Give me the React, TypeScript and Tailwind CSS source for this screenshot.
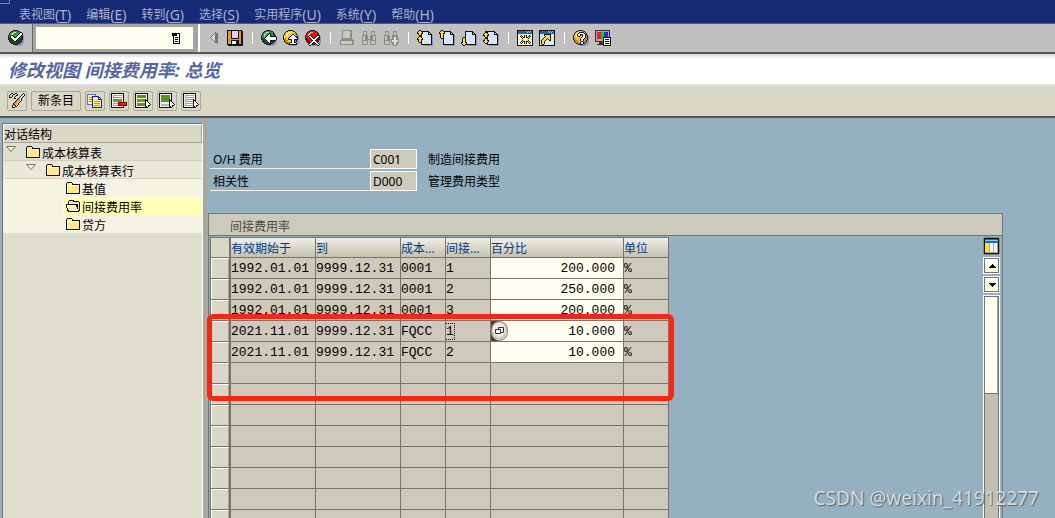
import type { ReactNode } from "react"
import clsx from "clsx"

const menus = [
  { label: "表视图", key: "T" },
  { label: "编辑", key: "E" },
  { label: "转到", key: "G" },
  { label: "选择", key: "S" },
  { label: "实用程序", key: "U" },
  { label: "系统", key: "Y" },
  { label: "帮助", key: "H" },
]

const rows = [
  { from: "1992.01.01", to: "9999.12.31", cost: "0001", type: "1", percent: "200.000" },
  { from: "1992.01.01", to: "9999.12.31", cost: "0001", type: "2", percent: "250.000" },
  { from: "1992.01.01", to: "9999.12.31", cost: "0001", type: "3", percent: "200.000" },
  { from: "2021.11.01", to: "9999.12.31", cost: "FQCC", type: "1", percent: "10.000", active: true },
  { from: "2021.11.01", to: "9999.12.31", cost: "FQCC", type: "2", percent: "10.000" },
]

const emptyRows = Array.from({ length: 10 }, (_, i) => i)

// one letter per pixel colour, anything else is transparent
const palette: Record<string, string> = {
  k: "#111111",
  w: "#ffffff",
  y: "#ffe51a",
  p: "#d6e6f8",
  s: "#8f8fb8",
  o: "#f29422",
  r: "#e01414",
  g: "#8d8d85",
  l: "#c9c9bd",
}

function Icon({ children }: { children: ReactNode }) {
  return (
    <svg viewBox="0 0 16 16" className="h-4 w-4 shrink-0" aria-hidden="true" shapeRendering="crispEdges">
      {children}
    </svg>
  )
}

function Pixels({ map, x = 0, y = 0 }: { map: string[]; x?: number; y?: number }) {
  return (
    <>
      {map.flatMap((line, dy) =>
        [...line].map((c, dx) =>
          palette[c] ? <rect key={dy * 16 + dx} x={x + dx} y={y + dy} width="1" height="1" fill={palette[c]} /> : null,
        ),
      )}
    </>
  )
}

function Ball({ dark, color, light, map }: { dark: string; color: string; light: string; map: string[] }) {
  return (
    <Icon>
      <path d="M14 5h1v1h1v7h-1v2h-2v1H7v-1H5z" fill="#8f8fc0" />
      <path d="M5 0h5v1h2v1h1v1h1v2h1v5h-1v2h-1v1h-1v1h-2v1H5v-1H3v-1H2v-1H1v-2H0V5h1V3h1V2h1V1h2z" fill="#222" />
      <path d="M5 1h5v1h2v1h1v2h1v5h-1v2h-1v1h-2v1H5v-1H3v-1H2v-2H1V5h1V3h1V2h2z" fill={dark} />
      <path d="M5 1h5v1h2v3h1v3h-2v2H8v2H5v-2H3V8H1V5h1V3h1V2h2z" fill={color} />
      <path d="M5 2h3v1H6v1H5v1H4v2H3V4h1V3h1z" fill={light} />
      <Pixels map={map} />
    </Icon>
  )
}

const checkMap = [
  "",
  "",
  "............kk",
  "...........kwwk",
  "..........kwwwk",
  "...kk....kwwwk",
  "..kwwk..kwwwk",
  "..kwwwkkwwwk",
  "...kwwwwwwk",
  "....kwwwwk",
  ".....kwwk",
  "......kk",
]

const backMap = [
  "",
  "",
  "",
  "........kk",
  ".......kwk",
  "......kwwk",
  ".....kwwwkkkkkk",
  "....kwwwwwwwwwwk",
  "...kwwwwwwwwwwwk",
  "....kwwwwwwwwwwk",
  ".....kwwwkkkkkk",
  "......kwwk",
  ".......kwk",
  "........kk",
]

const upMap = [
  "",
  "",
  "",
  "",
  ".........kk",
  "........kwwk",
  ".......kwwwwk",
  "......kwwwwwwk",
  ".....kwwwwwwwwk",
  ".....kkkkwwkkkk",
  "........kwwk",
  "........kwwk",
  ".......kkwwkk",
  "......kwwwwwwk",
  "......kkkkkkkk",
]

const cancelMap = [
  "",
  "",
  "",
  "",
  "",
  "....kk......kk",
  "...kwwk....kwwk",
  "....kwwk..kwwk",
  ".....kwwkkwwk",
  "......kwwwwk",
  ".......kwwk",
  "......kwwwwk",
  ".....kwwkkwwk",
  "....kwwk..kwwk",
  "...kwwk....kwwk",
  "....kk......kk",
]

const helpMap = [
  "",
  "",
  "......kkkkk",
  ".....kwwwwwk",
  "....kwwkkkwwk",
  "....kwwk.kwwk",
  ".....kk..kwwk",
  "........kwwwk",
  ".......kwwwk",
  ".......kwwk",
  ".......kwwk",
  "........kk",
  ".......kwwk",
  ".......kwwk",
  "........kk",
]

function TriangleLeftIcon() {
  return (
    <Icon>
      <path d="M11 3h2v11h-1v-1h-1v-1h-1v-1H9v-1H8z" fill="#777" />
      <path d="M10 2h1v11h-1v-1H9v-1H8v-1H7V9H6V8H5V7h1V6h1V5h1V4h1V3h1z" fill="#777" />
      <path d="M10 4v7H9v-1H8V9H7V8H6V7h1V6h1V5h1V4z" fill="#dcdcdc" />
    </Icon>
  )
}

function SaveIcon() {
  return (
    <Icon>
      <path d="M0 0h15v1h1v15H1v-1H0z" fill="#111" />
      <path d="M1 1h3v8h8V1h2v13h-2v-4H4v4H1z" fill="#f29422" />
      <path d="M5 1h6v7H5z" fill="#ddd0ec" />
      <path d="M5 11h6v3H5z" fill="#fff" />
      <path d="M9 11h2v3H9z" fill="#111" />
    </Icon>
  )
}

function PrintIcon() {
  return (
    <Icon>
      <path d="M3 0h10v9h1v1h1v5H1v-5h1V9h1z" fill="#8d8d85" />
      <path d="M4 1h7v7H4zM2 11h11v3H2z" fill="#c9c9bd" />
      <path d="M11 2h1v1h-1z" fill="#c9c9bd" />
    </Icon>
  )
}

function FindIcon({ more }: { more?: boolean }) {
  return (
    <Icon>
      <path d="M2 1h4v4h1v2h2V5h1V1h4v4h1v10H9v-5H7v5H1V5h1z" fill="#8d8d85" />
      <path d="M3 2h2v3H3zM11 2h2v3h-2zM2 6h2v4H2zM12 6h2v4h-2zM2 11h4v3H2zM10 11h4v3h-4zM7 7h2v2H7z" fill="#c4c4b8" />
      {more && (
        <>
          <path d="M10 6h4v3h2v4h-2v3h-4v-3H8V9h2z" fill="#8d8d85" />
          <path d="M11 7h2v3h2v2h-2v3h-2v-3H9v-2h2z" fill="#deded4" />
        </>
      )}
    </Icon>
  )
}

const arrowUp = ["..kk", ".kyyk", "kyyyyk", "kkyykk", ".kyyk"]
const arrowDown = [".kyyk", "kkyykk", "kyyyyk", ".kyyk", "..kk"]
const arrowStem = [".kyyk", ".kyyk", ".kyyk"]

function PageArrowIcon({ kind }: { kind: "first" | "prev" | "next" | "last" }) {
  return (
    <Icon>
      <path d="M6 15h9V5h1v11H6z" fill="#8f8fb8" />
      <path d="M4 1h8v1h1v1h1v1h1v11H4z" fill="#111" />
      <path d="M5 2h6v3h3v9H5z" fill="#d6e6f8" />
      <path d="M12 3h1v1h-1z" fill="#fff" />
      {kind === "first" && (
        <>
          <Pixels map={arrowUp} />
          <Pixels map={["..kk"]} y={5} />
          <Pixels map={arrowUp} y={6} />
          <Pixels map={[".kyyk", "..kk"]} y={11} />
        </>
      )}
      {kind === "prev" && (
        <>
          <Pixels map={arrowUp} />
          <Pixels map={arrowStem} y={5} />
          <Pixels map={["..kk"]} y={8} />
        </>
      )}
      {kind === "next" && (
        <>
          <Pixels map={["..kk"]} y={7} />
          <Pixels map={arrowStem} y={8} />
          <Pixels map={arrowDown} y={11} />
        </>
      )}
      {kind === "last" && (
        <>
          <Pixels map={["..kk"]} y={1} />
          <Pixels map={arrowUp} y={2} />
          <Pixels map={["..kk"]} y={7} />
          <Pixels map={["..kk"]} y={8} />
          <Pixels map={arrowDown} y={9} />
        </>
      )}
    </Icon>
  )
}

const starMap = [
  "......y",
  ".yk..kyk..ky",
  ".kyk.kyk.kyk",
  "..kykkykkyk",
  "...kywwwyk",
  "yyyyywwwyyyyy",
  "...kywwwyk",
  "..kykkykkyk",
  ".kyk.kyk.kyk",
  ".yk..kyk..ky",
  "......y",
]

const shortcutMap = [
  "....kkkkkkk",
  "....kyyyyyk",
  ".....kyyyyk",
  "....kyyyyyk",
  "...kyyykyyk",
  "..kyyyk.kyk",
  ".kyyyk...kk",
  ".kyyk",
  ".kyyk",
  ".kyyk",
  "..kk",
]

function WindowIcon({ shortcut }: { shortcut?: boolean }) {
  return (
    <Icon>
      <path d="M0 0h16v16H0z" fill="#111" />
      <path d="M1 1h14v3H1z" fill="#1768b0" />
      <path d="M9 1h1v1H9zM11 1h1v1h-1zM13 1h1v1h-1zM10 2h1v1h-1zM12 2h1v1h-1z" fill="#8fc4ee" />
      <path d="M1 4h14v11H1z" fill={shortcut ? "#dce8f6" : "#fffce0"} />
      {shortcut ? <Pixels map={shortcutMap} x={1} y={4} /> : <Pixels map={starMap} x={2} y={4} />}
    </Icon>
  )
}

function MonitorIcon() {
  return (
    <Icon>
      <path d="M0 0h15v12H9v2h1v1H2v-1h2v-2H0z" fill="#333" />
      <path d="M1 1h13v10H1z" fill="#aaa" />
      <path d="M2 2h4v7H2z" fill="#f01818" />
      <path d="M6 2h3v7H6z" fill="#12c738" />
      <path d="M9 2h4v7H9z" fill="#1528e8" />
      <path d="M8 7h8v9H8z" fill="#111" />
      <path d="M9 8h6v7H9z" fill="#fff" />
      <path d="M10 9h4v1h-4zM10 11h4v1h-4zM10 13h4v1h-4z" fill="#111" />
    </Icon>
  )
}

const pencilMap = [
  "..kk..kk......k",
  ".k..kk..k....kwk",
  "k..k...kk...kpwk",
  "k..k..k....kwpk",
  "kkk..k....kwwk",
  ".....kk..kowk",
  "........koowk",
  ".......kooowk",
  "......kooowk",
  ".....kooowk",
  "....kooowk",
  "....kroowk",
  "...kwrrwk",
  "...kwwkk",
  "...kkk",
]

function PencilIcon() {
  return (
    <Icon>
      <Pixels map={pencilMap} />
    </Icon>
  )
}

function CopyIcon() {
  return (
    <Icon>
      <path d="M0 1h9v11H0z" fill="#5a78b4" />
      <path d="M1 2h7v9H1z" fill="#fff0a0" />
      <path d="M2 4h3v1H2zM2 6h3v1H2zM2 8h3v1H2z" fill="#9a8c50" />
      <path d="M5 3h7v1h1v1h1v1h1v9H5z" fill="#1616e0" />
      <path d="M6 4h5v3h3v7H6z" fill="#fff08c" />
      <path d="M12 5h1v1h-1z" fill="#fff" />
      <path d="M7 8h6v1H7zM7 10h6v1H7zM7 12h6v1H7z" fill="#a89850" />
    </Icon>
  )
}

const cursorMap = ["k", "kk", "kwk", "kwwk", "kwwwk", "kwwwwk", "kwwkk", "kkwk", "..k"]

function ListIcon({ kind }: { kind: "delete" | "all" | "block" | "none" }) {
  return (
    <Icon>
      <path d="M0 0h13v15H0z" fill="#111" />
      <path d="M1 1h11v13H1z" fill="#f4f4ec" />
      {kind === "block" ? (
        <>
          <path d="M2 2h9v7H2z" fill="#5c9410" />
          <path d="M2 11h8v2H2z" fill="#a6b6c8" />
        </>
      ) : (
        <>
          <path d="M2 2h9v3H2z" fill={kind === "all" ? "#5c9410" : "#93a3b8"} />
          <path d="M2 6h9v3H2z" fill={kind === "none" ? "#93a3b8" : "#6ba01c"} />
          <path d="M2 10h8v3H2z" fill={kind === "all" ? "#5c9410" : "#93a3b8"} />
          {kind !== "all" && <path d="M3 3h8v1H3zM3 11h7v1H3z" fill="#fff" />}
          {kind === "none" && <path d="M3 7h8v1H3z" fill="#dbe9f6" />}
        </>
      )}
      {kind === "delete" ? (
        <>
          <path d="M7 9h9v4H7z" fill="#7a0000" />
          <path d="M8 10h7v2H8z" fill="#ff1010" />
        </>
      ) : (
        <Pixels map={cursorMap} x={10} y={6} />
      )}
    </Icon>
  )
}

function FolderIcon({ open }: { open?: boolean }) {
  return (
    <svg viewBox="0 0 15 12" className="h-3 w-[15px] shrink-0" aria-hidden="true" shapeRendering="crispEdges">
      {open ? (
        <>
          <path d="M2 1h1V0h5v1h5v1h1v9h-1v1H2v-1H1V8H0V4h2z" fill="#111" />
          <path d="M3 1h4v1h6v8h-1V4H3z" fill="#ffef9e" />
          <path d="M1 5h9v2h1v2h1v2H3v-1H2V8H1z" fill="#fff6b8" />
        </>
      ) : (
        <>
          <path d="M0 1h1V0h5v1h1v1h7v10H0z" fill="#111" />
          <path d="M1 1h5v2h7v8H1z" fill="#ffe88a" />
          <path d="M1 3h12v1H2v7H1z" fill="#fffbe0" />
        </>
      )}
    </svg>
  )
}

function ExpandIcon() {
  return (
    <svg viewBox="0 0 10 7" className="h-[7px] w-[10px] shrink-0" aria-hidden="true">
      <path d="M.5.5h9L5 5.500z" fill="#f3f1e6" stroke="#77766c" />
    </svg>
  )
}

function ToolButton({ label, children }: { label: string; children: ReactNode }) {
  return (
    <button type="button" aria-label={label} className="flex h-6 w-[22px] items-center justify-center">
      {children}
    </button>
  )
}

function Separator() {
  return (
    <span className="flex w-3 justify-center">
      <span className="h-3 w-px bg-white" />
    </span>
  )
}

function AppButton({ label, children }: { label: string; children: ReactNode }) {
  return (
    <button
      type="button"
      aria-label={label}
      className="flex h-5 w-5 items-center justify-center rounded-xs border border-[#aaa794]"
    >
      {children}
    </button>
  )
}

function TreeRow({ label, level, open, selected }: { label: string; level: number; open?: boolean; selected?: boolean }) {
  return (
    <li
      className={clsx(
        "flex h-[18px] items-center",
        level === 0 && "border-b border-[#cfcdbd] bg-[#e0dfcf] pl-[3px]",
        level === 1 && "border-b border-[#d4d2c2] bg-[#eae8d9] pl-[23px]",
        level === 2 && "bg-[#f4f2e1] pl-[60px]",
      )}
    >
      {level < 2 && (
        <button type="button" aria-label={"折叠 " + label} className="flex w-5 pb-1">
          <ExpandIcon />
        </button>
      )}
      <a
        href="#"
        className={clsx("flex h-full flex-1 items-center gap-px", level === 2 && "pl-[3px]", selected && "bg-[#ffffb5]")}
      >
        <FolderIcon open={open} />
        <span className="pt-1">{label}</span>
      </a>
    </li>
  )
}

function Field({ id, label, value, text }: { id: string; label: string; value: string; text: string }) {
  return (
    <div className="flex h-5 items-stretch">
      <label htmlFor={id} className="flex w-40 items-center border-b border-[#f4f2e6] pt-0.5 pl-[3px]">
        {label}
      </label>
      <input
        id={id}
        readOnly
        defaultValue={value}
        className="w-[47px] border border-white bg-[#cdcabb] px-0.5 pt-0.5 outline-none"
      />
      <span className="flex items-center pt-0.5 pl-[11px]">{text}</span>
    </div>
  )
}

const cell = "h-[21px] overflow-hidden border-r border-b border-[#77756b] p-0 pt-0.5 whitespace-nowrap"
const head =
  "h-[21px] overflow-hidden border-t border-r border-b border-[#77756b] bg-linear-to-b from-[#f1f0e9] to-[#c3c1b0] p-0 pt-0.5 text-left font-normal whitespace-nowrap"

function Selector({ label }: { label: string }) {
  return (
    <td className="h-[21px] border-r-2 border-b border-l border-[#77756b] p-0">
      <button
        type="button"
        aria-label={label}
        className="block h-5 w-[18px] border-t border-r border-l border-t-white border-r-[#a5a395] border-l-white bg-[#d9d8c7]"
      />
    </td>
  )
}

function RateTable() {
  return (
    <table className="w-[459px] table-fixed border-separate border-spacing-0 bg-[#cdcabb]">
      <colgroup>
        <col className="w-[21px]" />
        <col className="w-[85px]" />
        <col className="w-[85px]" />
        <col className="w-[45px]" />
        <col className="w-[45px]" />
        <col className="w-[133px]" />
        <col className="w-[45px]" />
      </colgroup>
      <thead className="text-[#003c87]">
        <tr>
          <th aria-label="选择" className="h-[21px] border-t border-r-2 border-b border-l border-[#77756b] bg-[#d9d8c7] p-0" />
          <th className={head}>有效期始于</th>
          <th className={head}>到</th>
          <th className={head}>成本...</th>
          <th className={head}>间接...</th>
          <th className={head}>百分比</th>
          <th className={head}>单位</th>
        </tr>
      </thead>
      <tbody className="font-['Liberation_Mono',monospace] text-[13px]">
        {rows.map((row, i) => (
          <tr key={i}>
            <Selector label={`第 ${i + 1} 行`} />
            <td className={cell}>{row.from}</td>
            <td className={cell}>{row.to}</td>
            <td className={cell}>{row.cost}</td>
            <td className={cell}>
              <span className={clsx(row.active && "outline-1 outline-[#111] outline-dotted")}>{row.type}</span>
            </td>
            <td className="relative h-[21px] border-r border-b border-[#77756b] bg-[#ffffef] p-0">
              <input
                aria-label={`百分比 ${i + 1}`}
                defaultValue={row.percent}
                className="block h-5 w-full pr-2 text-right outline-none"
              />
              {row.active && (
                <button type="button" aria-label="可能的条目" className="absolute top-0 left-0 h-5 w-[17px]">
                  <svg viewBox="0 0 17 20" className="h-5 w-[17px]" aria-hidden="true">
                    <path d="M0 0h8v20H0z" fill="#46443c" />
                    <rect x=".5" y=".5" width="16" height="19" rx="8" fill="#d0cec0" stroke="#8a887c" />
                    <rect x="2" y="2" width="12" height="14" rx="6" fill="#eeece2" />
                    <path d="M7.500 6.500h5v5h-5z" fill="#fff" stroke="#333" />
                    <path d="M4.500 8.500h5v4h-5z" fill="#fff" stroke="#333" />
                  </svg>
                </button>
              )}
            </td>
            <td className={cell}>%</td>
          </tr>
        ))}
        {emptyRows.map((i) => (
          <tr key={i}>
            <Selector label={`空行 ${i + 1}`} />
            <td className={cell} />
            <td className={cell} />
            <td className={cell} />
            <td className={cell} />
            <td className={cell} />
            <td className={cell} />
          </tr>
        ))}
      </tbody>
    </table>
  )
}

function TableScrollbar() {
  return (
    <div className="mr-0.5 flex w-[17px] flex-col gap-0.5">
      <button type="button" aria-label="表格设置" className="h-[18px] rounded-xs border border-[#8a8778] bg-[#cdcabb]">
        <svg viewBox="0 0 15 16" className="h-4 w-[15px]" aria-hidden="true" shapeRendering="crispEdges">
          <path d="M0 0h15v16H0z" fill="#111" />
          <path d="M1 1h13v14H1z" fill="#a8a8a8" />
          <path d="M1 1h13v4H1z" fill="#1d6cb8" />
          <path d="M1 2h13v1H1z" fill="#8fc4ee" />
          <path d="M1 5h4v9H1z" fill="#ffe51a" />
          <path d="M6 5h3v9H6zM10 5h3v9h-3z" fill="#f4f4f4" />
        </svg>
      </button>
      <button
        type="button"
        aria-label="向上滚动"
        className="flex h-[17px] items-center justify-center border border-white bg-[#fffff0] inset-ring inset-ring-[#77756b]"
      >
        <svg viewBox="0 0 8 4" className="h-1 w-2" aria-hidden="true" shapeRendering="crispEdges">
          <path d="M0 4h8L4 0z" />
        </svg>
      </button>
      <button
        type="button"
        aria-label="向下滚动"
        className="flex h-[17px] items-center justify-center border border-white bg-[#fffff0] inset-ring inset-ring-[#77756b]"
      >
        <svg viewBox="0 0 8 4" className="h-1 w-2" aria-hidden="true" shapeRendering="crispEdges">
          <path d="M0 0h8L4 4z" />
        </svg>
      </button>
      <div className="flex-1 border border-b-0 border-white bg-[#c2bfb0]">
        <div className="h-full border-x border-[#77756b]">
          <div className="h-[98px] border-y border-r border-y-[#77756b] border-r-[#a5a395] bg-[#fffff0]" />
        </div>
      </div>
    </div>
  )
}

export default function App() {
  return (
    <div className="relative flex h-screen flex-col overflow-hidden bg-[#94b0c1] font-['Noto_Sans','Noto_Sans_CJK_SC',sans-serif] text-xs leading-4 text-black">
      <nav className="relative flex h-6 shrink-0 items-end gap-[15px] border-b border-[#4a5a90] bg-[#172a75] pl-[19px] text-[#aab0d0]">
        <span className="absolute top-0 left-0 h-1 w-[10px] border-r border-b border-[#7a86b8]" />
        {menus.map((menu) => (
          <button key={menu.key} type="button" className="flex items-center whitespace-nowrap">
            {menu.label}
            <span className="text-sm leading-4">
              (<u className="underline-offset-2">{menu.key}</u>)
            </span>
          </button>
        ))}
      </nav>

      <div className="flex h-7 shrink-0 items-center bg-[#c0c0c0]">
        <div className="flex w-8 justify-center">
          <ToolButton label="回车">
            <Ball dark="#0b4a16" color="#2f9a2b" light="#b4e29a" map={checkMap} />
          </ToolButton>
        </div>
        <div className="flex h-full w-[168px] items-center border-r-2 border-l border-r-white border-l-[#666] bg-[#a4a4a4] px-[3px]">
          <div className="flex h-[22px] w-[157px] items-center bg-[#ffffef]">
            <input aria-label="命令" className="h-full min-w-0 flex-1 px-1 outline-none" />
            <button type="button" aria-label="命令历史" className="mr-3 flex">
              <svg viewBox="0 0 9 11" className="h-[11px] w-[9px]" aria-hidden="true" shapeRendering="crispEdges">
                <path d="M0 0h8v11H1V3H0z" />
                <path d="M2 3h5v7H2zM5 1h2v2H5z" fill="#fff" />
                <path d="M3 4h3v1H3zM3 6h3v1H3zM3 8h3v1H3zM0 0h6L3 3z" />
              </svg>
            </button>
          </div>
        </div>
        <div className="flex items-center pl-0.5">
          <ToolButton label="后退列表">
            <TriangleLeftIcon />
          </ToolButton>
          <ToolButton label="保存">
            <SaveIcon />
          </ToolButton>
          <Separator />
          <ToolButton label="返回">
            <Ball dark="#0b4a3a" color="#2f8a4b" light="#a4e2b0" map={backMap} />
          </ToolButton>
          <ToolButton label="退出">
            <Ball dark="#c88600" color="#f9cc20" light="#fff6b0" map={upMap} />
          </ToolButton>
          <ToolButton label="取消">
            <Ball dark="#9a0000" color="#ee1010" light="#ffb0a0" map={cancelMap} />
          </ToolButton>
          <Separator />
          <ToolButton label="打印">
            <PrintIcon />
          </ToolButton>
          <ToolButton label="查找">
            <FindIcon />
          </ToolButton>
          <ToolButton label="继续查找">
            <FindIcon more />
          </ToolButton>
          <Separator />
          <ToolButton label="首页">
            <PageArrowIcon kind="first" />
          </ToolButton>
          <ToolButton label="上一页">
            <PageArrowIcon kind="prev" />
          </ToolButton>
          <ToolButton label="下一页">
            <PageArrowIcon kind="next" />
          </ToolButton>
          <ToolButton label="末页">
            <PageArrowIcon kind="last" />
          </ToolButton>
          <Separator />
          <ToolButton label="新建窗口">
            <WindowIcon />
          </ToolButton>
          <ToolButton label="快捷方式">
            <WindowIcon shortcut />
          </ToolButton>
          <Separator />
          <ToolButton label="帮助">
            <Ball dark="#d89000" color="#f9c020" light="#fff6b0" map={helpMap} />
          </ToolButton>
          <ToolButton label="布局">
            <MonitorIcon />
          </ToolButton>
        </div>
      </div>

      <header className="flex h-[34px] shrink-0 items-center border-t-2 border-b-2 border-t-[#555] border-b-[#dcdcdc] bg-linear-to-b from-[#d8d8d8] to-white to-15% pl-2">
        <h1 className="pt-0.5 text-lg leading-6 font-bold text-[#5566a8] italic">修改视图 间接费用率: 总览</h1>
      </header>

      <div className="flex h-8 shrink-0 items-center gap-1 border-b-2 border-[#55534c] bg-[#d9d7c5] pl-[7px]">
        <AppButton label="显示/更改">
          <PencilIcon />
        </AppButton>
        <button type="button" className="h-5 w-[50px] rounded-xs border border-[#aaa794]">
          新条目
        </button>
        <AppButton label="复制">
          <CopyIcon />
        </AppButton>
        <AppButton label="删除">
          <ListIcon kind="delete" />
        </AppButton>
        <AppButton label="全选">
          <ListIcon kind="all" />
        </AppButton>
        <AppButton label="选择块">
          <ListIcon kind="block" />
        </AppButton>
        <AppButton label="取消全选">
          <ListIcon kind="none" />
        </AppButton>
      </div>

      <div className="flex min-h-0 flex-1">
        <aside className="mt-[5px] ml-0.5 flex w-[201px] shrink-0 flex-col border-t border-r border-l border-t-[#77756b] border-r-white border-l-[#77756b] bg-[#e0dfcf]">
          <h2 className="flex h-[19px] shrink-0 items-center border border-t-white border-r-[#a5a395] border-b-[#a5a395] border-l-white bg-[#d9d7c5] pt-0.5">
            对话结构
          </h2>
          <ul>
            <TreeRow label="成本核算表" level={0} />
            <TreeRow label="成本核算表行" level={1} />
            <TreeRow label="基值" level={2} />
            <TreeRow label="间接费用率" level={2} open selected />
            <TreeRow label="贷方" level={2} />
          </ul>
        </aside>
        <div className="w-1 shrink-0 bg-[#aba799]" />

        <main className="flex min-w-0 flex-1 flex-col pl-px">
          <div className="flex flex-col gap-0.5 pt-[31px] pl-0.5">
            <Field id="overhead" label="O/H 费用" value="C001" text="制造间接费用" />
            <Field id="dependency" label="相关性" value="D000" text="管理费用类型" />
          </div>

          <section className="mt-[22px] mr-[52px] flex min-h-0 flex-1 flex-col border-t border-r border-l border-[#77756b]">
            <h2 className="flex h-[22px] shrink-0 items-center border-b border-[#77756b] bg-[#cdcabb] pt-1 pl-[21px] text-[#4a4943]">
              间接费用率
            </h2>
            <div className="flex min-h-0 flex-1 justify-between pt-px pl-px">
              <div className="relative min-h-0">
                <RateTable />
                <div className="pointer-events-none absolute top-[77px] -left-[3px] h-[87px] w-[467px] rounded-md border-[5px] border-[#ff2412]" />
              </div>
              <TableScrollbar />
            </div>
          </section>
        </main>
      </div>

      <p className="absolute right-4 bottom-2 text-[19px] leading-6 text-[#d5dade] [text-shadow:1px_1px_1px_#55616a]">
        CSDN @weixin_41912277
      </p>
    </div>
  )
}
